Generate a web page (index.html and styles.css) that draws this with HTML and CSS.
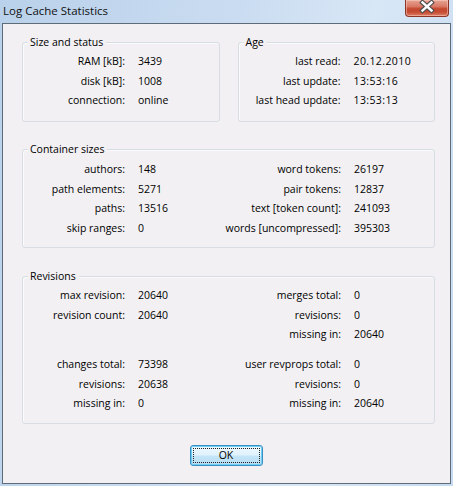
FILE: index.html
```html
<!DOCTYPE html>
<html>
<head>
<meta charset="utf-8">
<title>Log Cache Statistics</title>
<link rel="stylesheet" href="styles.css">
</head>
<body>
<div class="window">
  <div class="titlebar">
    <span class="title">Log Cache Statistics</span>
    <div class="close-btn">
      <svg width="44" height="17" viewBox="0 0 44 17">
        <path d="M17.5 3.5 L26.5 11.5 M26.5 3.5 L17.5 11.5" stroke="#4a4a4a" stroke-width="4.6" stroke-linecap="square" fill="none"/>
        <path d="M17.5 3.5 L26.5 11.5 M26.5 3.5 L17.5 11.5" stroke="#ffffff" stroke-width="2.4" stroke-linecap="square" fill="none"/>
      </svg>
    </div>
  </div>
  <div class="client">
    <div class="top-row">
      <div class="group g-small">
        <span class="legend">Size and status</span>
        <div class="grid2">
          <span class="lbl">RAM [kB]:</span><span class="val">3439</span>
          <span class="lbl">disk [kB]:</span><span class="val">1008</span>
          <span class="lbl">connection:</span><span class="val">online</span>
        </div>
      </div>
      <div class="group g-small">
        <span class="legend">Age</span>
        <div class="grid2">
          <span class="lbl">last read:</span><span class="val num">20.12.2010</span>
          <span class="lbl">last update:</span><span class="val num">13:53:16</span>
          <span class="lbl">last head update:</span><span class="val num">13:53:13</span>
        </div>
      </div>
    </div>
    <div class="group g-container">
      <span class="legend">Container sizes</span>
      <div class="grid4">
        <span class="lbl">authors:</span><span class="val">148</span>
        <span class="lbl">word tokens:</span><span class="val">26197</span>
        <span class="lbl">path elements:</span><span class="val">5271</span>
        <span class="lbl">pair tokens:</span><span class="val">12837</span>
        <span class="lbl">paths:</span><span class="val">13516</span>
        <span class="lbl">text [token count]:</span><span class="val">241093</span>
        <span class="lbl">skip ranges:</span><span class="val">0</span>
        <span class="lbl">words [uncompressed]:</span><span class="val">395303</span>
      </div>
    </div>
    <div class="group g-revisions">
      <span class="legend">Revisions</span>
      <div class="grid4">
        <span class="lbl">max revision:</span><span class="val">20640</span>
        <span class="lbl">merges total:</span><span class="val">0</span>
        <span class="lbl">revision count:</span><span class="val">20640</span>
        <span class="lbl">revisions:</span><span class="val">0</span>
        <span class="lbl"></span><span class="val"></span>
        <span class="lbl">missing in:</span><span class="val">20640</span>
        <div class="spacer"></div>
        <span class="lbl">changes total:</span><span class="val">73398</span>
        <span class="lbl">user revprops total:</span><span class="val">0</span>
        <span class="lbl">revisions:</span><span class="val">20638</span>
        <span class="lbl">revisions:</span><span class="val">0</span>
        <span class="lbl">missing in:</span><span class="val">0</span>
        <span class="lbl">missing in:</span><span class="val">20640</span>
      </div>
    </div>
    <div class="buttons">
      <button class="ok-btn"><span class="focus">OK</span></button>
    </div>
  </div>
</div>
</body>
</html>
```
FILE: styles.css
```css
html, body {
  margin: 0;
  padding: 0;
}
body {
  width: 453px;
  height: 486px;
  overflow: hidden;
  font-family: "Open Sans", "Noto Sans", sans-serif;
  font-size: 10.5px;
  color: #000;
}
.window {
  height: 486px;
  display: flex;
  flex-direction: column;
  background: linear-gradient(100deg, #b9d1ea 0%, #cadcf1 45%, #d8e7f6 70%, #c6daf0 100%);
}
.titlebar {
  height: 23px;
  flex: none;
  position: relative;
  display: flex;
  align-items: center;
  padding-left: 3px;
  padding-bottom: 2px;
  box-sizing: border-box;
}
.title {
  font-size: 11.5px;
  color: #111;
}
.close-btn {
  position: absolute;
  top: 0;
  left: 405px;
  width: 44px;
  height: 17px;
  box-sizing: border-box;
  border: 1px solid #8c3527;
  border-top: none;
  border-radius: 0 0 4px 4px;
  background: linear-gradient(#e7a494 0%, #d97a66 40%, #c5472f 55%, #c54b33 75%, #de7f63 100%);
  box-shadow: inset 0 0 0 1px rgba(255, 220, 210, 0.45);
}
.close-btn svg {
  display: block;
  margin-top: -1px;
  margin-left: -1px;
}
.client {
  flex: 1;
  margin: 0 2px 2px 2px;
  border: 1px solid #5e6c7a;
  background: #f2f0f3;
  padding: 18px 15px 0 19px;
}
.top-row {
  display: grid;
  grid-template-columns: 1fr 1fr;
  column-gap: 18px;
}
.group {
  position: relative;
  box-sizing: border-box;
  border: 1px solid #d6dde3;
  border-radius: 3px;
  box-shadow: inset 1px 1px 0 #fbfbfc;
}
.legend {
  position: absolute;
  top: -8px;
  left: 5px;
  padding: 0 3px 0 2px;
  line-height: 15px;
  background: #f2f0f3;
}
.g-small {
  height: 80px;
  padding-top: 9px;
}
.g-container {
  margin-top: 27px;
  height: 99px;
  padding-top: 10px;
}
.g-revisions {
  margin-top: 28px;
  height: 148px;
  padding-top: 9px;
}
.grid2 {
  display: grid;
  grid-template-columns: 102px 1fr;
  column-gap: 13px;
}
.grid4 {
  display: grid;
  grid-template-columns: 102px 72px 118px 1fr;
  column-gap: 13px;
}
.lbl {
  text-align: right;
  line-height: 19.5px;
  white-space: nowrap;
}
.val {
  line-height: 19.5px;
  white-space: nowrap;
}
.num {
  letter-spacing: 0.4px;
}
.spacer {
  grid-column: 1 / -1;
  height: 10.5px;
}
.buttons {
  display: flex;
  justify-content: center;
  margin-top: 21px;
}
.ok-btn {
  width: 73px;
  height: 21px;
  margin-left: -5px;
  padding: 2px;
  box-sizing: border-box;
  border: 1px solid #3c8ec2;
  border-radius: 3px;
  background: linear-gradient(#eef8fe 0%, #e0f2fd 48%, #c6e6f8 52%, #b6dcf2 100%);
  box-shadow: inset 0 0 0 1px #6fd0f5;
  font-family: "Open Sans", "Noto Sans", sans-serif;
  font-size: 10.5px;
  color: #000;
  display: flex;
}
.focus {
  flex: 1;
  display: flex;
  align-items: center;
  justify-content: center;
  border: 1px dotted #222;
  line-height: 13px;
}
```
